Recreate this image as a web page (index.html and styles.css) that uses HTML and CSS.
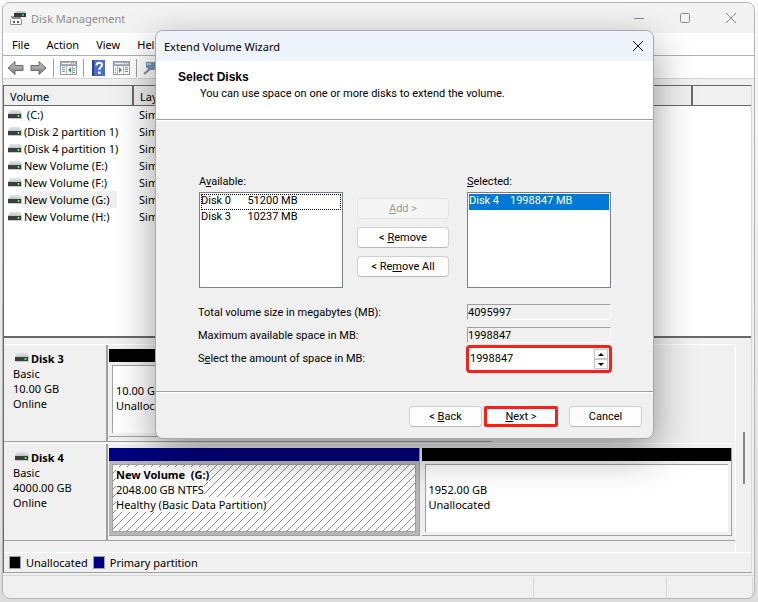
FILE: index.html
```
<!DOCTYPE html>
<html lang="en">
<head>
  <meta charset="UTF-8" />
  <meta name="viewport" content="width=device-width, initial-scale=1.0"/>
  <title>Disk Management</title>
  <link rel="stylesheet" href="styles.css">
</head>
<body>

<!-- shared icons -->
<svg class="sprite" aria-hidden="true">
  <defs>
    <linearGradient id="metal" x1="0" y1="0" x2="0" y2="1">
      <stop offset="0" stop-color="#e2e5e8"/>
      <stop offset="1" stop-color="#c3c7cc"/>
    </linearGradient>
    <linearGradient id="arrowFill" x1="0" y1="0" x2="0" y2="1">
      <stop offset="0" stop-color="#c4c4c4"/>
      <stop offset="1" stop-color="#7e7e7e"/>
    </linearGradient>
  </defs>
  <symbol id="drive" viewBox="0 0 14 9">
    <path d="M2 0h10l2 4H0z" fill="url(#metal)"/>
    <rect y="3" width="14" height="6" fill="#c3c7cc"/>
    <rect y="4" width="13" height="4" fill="#3b3d3f"/>
    <rect x="9" y="5" width="3" height="2" fill="#1f8f2c"/>
    <rect x="10" y="5" width="1" height="2" fill="#5dff5a"/>
  </symbol>
</svg>

<main class="window">
  <header class="titlebar">
    <svg class="app-icon" viewBox="0 0 16 15">
      <path d="M6 0h9l1 3H4z" fill="#c3c7cc"/>
      <rect x="4" y="2" width="12" height="4" fill="#35383b"/>
      <rect x="12" y="3" width="2" height="2" fill="#2bd13a"/>
      <path d="M1 5h3v2H1z" fill="#9aa0a6"/>
      <rect x="2" y="6" width="9" height="2" fill="#8a8d90"/>
      <rect x="0" y="8" width="12" height="6" rx="1" fill="#8d8f92"/>
      <rect x="1" y="8" width="10" height="5" fill="#f8f8f8"/>
      <rect x="3" y="10" width="2" height="2" fill="#5d5f62"/>
      <rect x="7" y="10" width="2" height="2" fill="#5d5f62"/>
    </svg>
    <h1>Disk Management</h1>
    <div class="caption-buttons">
      <button aria-label="Minimize"><svg viewBox="0 0 12 12"><path d="M1 6.500h10"/></svg></button>
      <button aria-label="Maximize"><svg viewBox="0 0 12 12"><rect x="1.500" y="1.500" width="9" height="9" rx="1"/></svg></button>
      <button aria-label="Close"><svg viewBox="0 0 12 12"><path d="M1 1l10 10M11 1L1 11"/></svg></button>
    </div>
  </header>

  <nav class="menubar">
    <button>File</button>
    <button>Action</button>
    <button>View</button>
    <button>Help</button>
  </nav>

  <div class="toolbar">
    <button aria-label="Back"><svg viewBox="0 0 17 14"><path d="M1 7l7-6.500v4h8v5H8v4z" fill="url(#arrowFill)" stroke="#6b6b6b"/></svg></button>
    <button aria-label="Forward"><svg viewBox="0 0 17 14"><path d="M16 7L9 .5v4H1v5h8v4z" fill="url(#arrowFill)" stroke="#6b6b6b"/></svg></button>
    <span class="sep"></span>
    <button aria-label="Show console tree">
      <svg viewBox="0 0 17 14">
        <rect x=".5" y=".5" width="16" height="13" fill="#fff" stroke="#969ba1"/>
        <path d="M1 1h15v3H1z" fill="#a9b3bf"/><path d="M2 2.500h9M12 2.500h1M14 2.500h1" stroke="#f1f4f8"/>
        <path d="M1 4.500h15" stroke="#969ba1"/>
        <path d="M2 6.500h3M2 8.500h3M2 10.500h3M13 7.500h2M13 9.500h2M13 11.500h2" stroke="#7391b5"/>
        <path d="M6.500 5v8M12.500 5v8" stroke="#b3b9c0"/>
        <path d="M11 6v6L8 9z" fill="#3faa36"/>
      </svg>
    </button>
    <span class="sep"></span>
    <button aria-label="Help topics">
      <svg class="help" viewBox="0 0 17 16">
        <rect x="2" y="0" width="13" height="16" fill="#4a6bd0"/>
        <path d="M2 0h2v16H2z" fill="#27408f"/>
        <path d="M6.500 5.500c0-4 5.500-3.500 5.500-.5 0 2-2.700 2-2.700 5" fill="none" stroke="#fff" stroke-width="2"/>
        <rect x="8" y="11.500" width="2.500" height="2.500" fill="#fff"/>
      </svg>
    </button>
    <button aria-label="Show action pane">
      <svg viewBox="0 0 17 14">
        <rect x=".5" y=".5" width="16" height="13" fill="#fff" stroke="#969ba1"/>
        <path d="M1 1h15v3H1z" fill="#a9b3bf"/><path d="M2 2.500h9M12 2.500h1M14 2.500h1" stroke="#f1f4f8"/>
        <path d="M1 4.500h15" stroke="#969ba1"/>
        <path d="M2 7.500h1M2 9.500h1M2 11.500h1M12 6.500h3M12 8.500h3M12 10.500h3" stroke="#7391b5"/>
        <path d="M4.500 5v8M10.500 5v8" stroke="#b3b9c0"/>
        <path d="M6 6v6l3-3z" fill="#3faa36"/>
      </svg>
    </button>
    <span class="sep"></span>
    <button aria-label="Rescan disks">
      <svg viewBox="0 0 17 14">
        <path d="M1 13l6-5" stroke="#8a8a8a" stroke-width="2"/>
        <path d="M3 1h13v8H6L3 6z" fill="#7397b6"/>
        <path d="M4 2h4v2H4z" fill="#b6cbdc"/>
      </svg>
    </button>
  </div>

  <section class="workspace">
    <div class="volumes">
      <table>
        <colgroup><col class="col-name"><col><col class="col-last"></colgroup>
        <thead>
          <tr><th>Volume</th><th>Layout</th><th></th></tr>
        </thead>
        <tbody>
          <tr><td><svg class="drive"><use href="#drive"/></svg><span>&nbsp;(C:)</span></td><td>Simple</td><td></td></tr>
          <tr><td><svg class="drive"><use href="#drive"/></svg><span>(Disk 2 partition 1)</span></td><td>Simple</td><td></td></tr>
          <tr><td><svg class="drive"><use href="#drive"/></svg><span>(Disk 4 partition 1)</span></td><td>Simple</td><td></td></tr>
          <tr><td><svg class="drive"><use href="#drive"/></svg><span>New Volume (E:)</span></td><td>Simple</td><td></td></tr>
          <tr><td><svg class="drive"><use href="#drive"/></svg><span>New Volume (F:)</span></td><td>Simple</td><td></td></tr>
          <tr class="current"><td><svg class="drive"><use href="#drive"/></svg><span>New Volume (G:)</span></td><td>Simple</td><td></td></tr>
          <tr><td><svg class="drive"><use href="#drive"/></svg><span>New Volume (H:)</span></td><td>Simple</td><td></td></tr>
        </tbody>
      </table>
    </div>

    <div class="graph">
      <div class="disks">
        <article class="disk">
          <div class="disk-info">
            <h2><svg class="drive"><use href="#drive"/></svg>Disk 3</h2>
            <p>Basic<br>10.00 GB<br>Online</p>
          </div>
          <div class="partitions short">
            <div class="partition">
              <div class="bar"></div>
              <div class="box"><p><br>10.00 GB<br>Unallocated</p></div>
            </div>
          </div>
        </article>
        <article class="disk">
          <div class="disk-info">
            <h2><svg class="drive"><use href="#drive"/></svg>Disk 4</h2>
            <p>Basic<br>4000.00 GB<br>Online</p>
          </div>
          <div class="partitions">
            <div class="partition primary">
              <div class="bar"></div>
              <div class="box hatched"><p><b>New Volume &nbsp;(G:)</b><br><span>2048.00 GB NTFS</span><br><span>Healthy (Basic Data Partition)</span></p></div>
            </div>
            <div class="partition">
              <div class="bar"></div>
              <div class="box"><p><br>1952.00 GB<br>Unallocated</p></div>
            </div>
          </div>
        </article>
      </div>
      <div class="scroll"><div class="thumb"></div></div>
    </div>

    <div class="legend">
      <span class="swatch"></span>Unallocated
      <span class="swatch navy"></span>Primary partition
    </div>
  </section>

  <footer class="statusbar"><span></span><span></span><span></span></footer>
</main>

<section class="dialog" role="dialog" aria-labelledby="wizardTitle">
  <header class="dialog-title">
    <h2 id="wizardTitle">Extend Volume Wizard</h2>
    <button aria-label="Close"><svg viewBox="0 0 12 12"><path d="M1 1l10 10M11 1L1 11"/></svg></button>
  </header>
  <div class="dialog-intro">
    <h3>Select Disks</h3>
    <p>You can use space on one or more disks to extend the volume.</p>
  </div>

  <div class="dialog-body">
    <div class="picker">
      <div>
        <label for="available">A<u>v</u>ailable:</label>
        <select id="available" size="6">
          <option class="focused">Disk 0&nbsp;&nbsp;&nbsp;&nbsp;&nbsp;&nbsp;51200 MB</option>
          <option>Disk 3&nbsp;&nbsp;&nbsp;&nbsp;&nbsp;&nbsp;10237 MB</option>
        </select>
      </div>
      <div class="picker-buttons">
        <button class="btn" disabled><u>A</u>dd &gt;</button>
        <button class="btn">&lt; <u>R</u>emove</button>
        <button class="btn">&lt; Re<u>m</u>ove All</button>
      </div>
      <div>
        <label for="selected"><u>S</u>elected:</label>
        <select id="selected" size="6">
          <option selected>Disk 4&nbsp;&nbsp;&nbsp;&nbsp;1998847 MB</option>
        </select>
      </div>
    </div>

    <div class="field">
      <label for="total">Total volume size in megabytes (MB):</label>
      <input id="total" class="readonly" value="4095997" readonly>
    </div>
    <div class="field">
      <label for="maximum">Maximum available space in MB:</label>
      <input id="maximum" class="readonly" value="1998847" readonly>
    </div>
    <div class="field amount">
      <label for="amount">S<u>e</u>lect the amount of space in MB:</label>
      <div class="spinner">
        <input id="amount" value="1998847">
        <div class="arrows">
          <button aria-label="Increase"><svg viewBox="0 0 6 3"><path d="M0 3l3-3 3 3z"/></svg></button>
          <button aria-label="Decrease"><svg viewBox="0 0 6 3"><path d="M0 0h6L3 3z"/></svg></button>
        </div>
      </div>
    </div>
  </div>

  <footer class="dialog-footer">
    <button class="btn">&lt; <u>B</u>ack</button>
    <button class="btn marked"><u>N</u>ext &gt;</button>
    <button class="btn cancel">Cancel</button>
  </footer>
</section>

</body>
</html>
```
FILE: styles.css
```
:root {
  --face: #f0f0f0;
  --shadow: #a0a0a0;
  --dark: #696969;
  --navy: #000080;
  --red: #fb2015;
  --ui: "Noto Sans", "Open Sans", sans-serif;
  --dlg: Roboto, "Liberation Sans", sans-serif;
}
* {
  box-sizing: border-box;
}
body {
  margin: 0;
  min-height: 100vh;
  display: flex;
  padding: 2px 3px 3px 2px;
  font: 11px/15px var(--ui);
  color: #000;
  background: linear-gradient(#fafafa, #dcdcdc);
}
h1, h2, h3, p {
  margin: 0;
  font-size: inherit;
  font-weight: normal;
}
button, input, select {
  font: inherit;
  color: inherit;
  margin: 0;
  padding: 0;
  border: 0;
  background: none;
  border-radius: 0;
}
svg {
  display: block;
}
.sprite {
  position: absolute;
  width: 0;
  height: 0;
}
.window {
  flex: 1;
  display: flex;
  flex-direction: column;
  border: 1px solid #b4b4b4;
  border-radius: 8px;
  background: var(--face);
  overflow: hidden;
}

/* title bar */
.titlebar {
  display: flex;
  align-items: center;
  height: 30px;
  padding-left: 7px;
  background: #f3f3f3;
  color: #8c8c8c;
}
.app-icon {
  width: 16px;
  height: 15px;
  margin-right: 5px;
}
.caption-buttons {
  display: flex;
  margin-left: auto;
}
.caption-buttons button {
  width: 46px;
  display: grid;
  place-items: center;
}
.caption-buttons svg, .dialog-title svg {
  width: 12px;
  height: 12px;
  fill: none;
  stroke: #8a8a8a;
}

/* menu and tools */
.menubar {
  display: flex;
  gap: 17px;
  height: 23px;
  padding: 0 9px;
  background: #fff;
  border-bottom: 1px solid #b0b0b0;
}
.toolbar {
  display: flex;
  align-items: center;
  gap: 6px;
  height: 23px;
  padding: 2px 4px 0;
  background: #fff;
  border-bottom: 1px solid #d5d5d5;
}
.toolbar svg {
  width: 17px;
  height: 14px;
}
.toolbar .help {
  height: 16px;
}
.sep {
  width: 1px;
  height: 18px;
  background: #a0a0a0;
}

/* volume list */
.workspace {
  flex: 1;
  display: flex;
  flex-direction: column;
  margin: 6px 2px 2px 0;
  border: 1px solid var(--dark);
  border-right-color: #d8d8d8;
  border-bottom-color: var(--shadow);
}
.volumes {
  flex: 1;
  background: #fff;
  border-bottom: 2px solid var(--dark);
}
.volumes table {
  width: 100%;
  table-layout: fixed;
  border-collapse: collapse;
}
.col-name {
  width: 129px;
}
.col-last {
  width: 59px;
}
.volumes th {
  height: 19px;
  padding: 2px 6px 0;
  text-align: left;
  font-weight: normal;
  background: var(--face);
  border-right: 2px solid var(--dark);
  border-bottom: 1px solid var(--dark);
}
.volumes th:last-child {
  border-right: 0;
}
.volumes td {
  height: 17px;
  padding: 0 6px 0 4px;
  white-space: nowrap;
}
.volumes td + td {
  padding-left: 6px;
}
.drive {
  display: inline-block;
  width: 14px;
  height: 9px;
  vertical-align: 0;
}
.volumes td span {
  display: inline-block;
  line-height: 17px;
  padding: 0 8px 0 2px;
}
.current span {
  background: var(--face);
}

/* disk graph */
.graph {
  display: flex;
  padding-top: 6px;
}
.disks {
  flex: 1;
  display: flex;
  flex-direction: column;
  gap: 1px;
  border-right: 1px solid #fff;
  padding-bottom: 11px;
}
.disk {
  display: flex;
  height: 98px;
  border-top: 1px solid #fff;
}
.disk-info {
  width: 104px;
  padding: 6px 9px;
  border-right: 2px solid var(--shadow);
  border-bottom: 1px solid var(--shadow);
}
.disk-info h2 {
  font-weight: bold;
  padding-left: 2px;
}
.disk-info .drive {
  margin-right: 2px;
  vertical-align: 1px;
}
.partitions {
  flex: 1;
  display: flex;
  gap: 2px;
  padding: 4px 3px 4px 1px;
  border-bottom: 1px solid var(--shadow);
}
.partitions.short {
  flex: 0 0 384px;
}
.partition {
  flex: 1;
  display: flex;
  flex-direction: column;
  border-right: 1px solid var(--shadow);
  border-bottom: 1px solid var(--shadow);
}
.bar {
  height: 13px;
  background: #000;
}
.box {
  flex: 1;
  margin: 3px;
  padding: 2px 3px;
  background: #fff;
  border-top: 1px solid var(--shadow);
  border-left: 1px solid var(--shadow);
}
.primary {
  background: #b8b8b8;
}
.primary .bar {
  background: var(--navy);
}
.hatched {
  border: 1px solid var(--shadow);
  background: linear-gradient(135deg, #fff 46%, #8c8c8c 46% 54%, #fff 54%) 0 0 / 8px 8px;
}
.hatched b, .hatched span {
  background: #fff;
}
.scroll {
  width: 15px;
  padding: 88px 5px 0 7px;
}
.thumb {
  width: 2px;
  height: 52px;
  background: #858585;
}

/* legend and status */
.legend {
  display: flex;
  align-items: center;
  gap: 5px;
  height: 20px;
  padding: 0 5px;
  border-top: 1px solid #fff;
}
.swatch {
  width: 12px;
  height: 13px;
  background: #000;
  border: 1px solid var(--shadow);
}
.swatch.navy {
  background: var(--navy);
}
.statusbar {
  display: flex;
  height: 23px;
  padding: 1px 1px 1px 0;
  border-top: 1px solid #d5d5d5;
}
.statusbar span {
  width: 86px;
  border-right: 1px solid #d5d5d5;
}
.statusbar span:first-child {
  flex: 1;
}
.statusbar span:nth-child(2) {
  width: 133px;
}

/* wizard */
.dialog {
  position: absolute;
  top: 30px;
  left: 155px;
  width: 499px;
  display: flex;
  flex-direction: column;
  font: 11px/13px var(--dlg);
  background: var(--face);
  border: 1px solid #a8a8a8;
  border-radius: 8px;
  box-shadow: 0 14px 40px rgba(0, 0, 0, .4);
  overflow: hidden;
}
.dialog-title {
  display: flex;
  align-items: center;
  justify-content: space-between;
  height: 30px;
  padding: 0 9px 0 8px;
  font: 11px/15px var(--ui);
  background: #eff3fb;
}
.dialog-title svg {
  stroke: #111;
}
.dialog-intro {
  height: 59px;
  padding: 9px 22px;
  background: #fff;
  border-bottom: 1px solid var(--shadow);
}
.dialog-intro h3 {
  font: bold 12px/15px "Liberation Sans", Arial, sans-serif;
}
.dialog-intro p {
  padding: 2px 22px;
}
.dialog-body {
  padding: 54px 42px 18px;
  border-top: 1px solid #fff;
}
.picker {
  display: grid;
  grid-template-columns: 144px 96px 144px;
  gap: 14px;
  padding-left: 1px;
  margin-bottom: 16px;
}
.picker label {
  display: block;
  margin-bottom: 4px;
}
select {
  display: block;
  width: 100%;
  height: 96px;
  padding: 1px;
  background: #fff;
  border: 1px solid #7a7f8a;
  overflow: hidden;
  outline: 0;
}
option {
  height: 16px;
  min-height: 16px;
  padding: 0;
  line-height: 16px;
}
option.focused {
  outline: 1px dotted #000;
  outline-offset: -1px;
}
option:checked {
  background: linear-gradient(#0078d7, #0078d7);
  -webkit-text-fill-color: #fff;
}
.picker-buttons {
  display: flex;
  flex-direction: column;
  gap: 8px;
  padding: 23px 4px 0 0;
}
.btn {
  height: 21px;
  background: #fdfdfd;
  border: 1px solid #d0d0d0;
  border-bottom-color: #b8b8b8;
  border-radius: 4px;
  white-space: pre;
}
.btn:disabled {
  color: #9a9a9a;
  background: #f5f5f5;
  border-color: #e3e3e3;
}
.field {
  display: flex;
  align-items: center;
  justify-content: space-between;
  margin-bottom: 7px;
}
.readonly {
  width: 144px;
  height: 16px;
  border: 1px solid #fff;
  border-top-color: var(--shadow);
  border-left-color: var(--shadow);
}
.field.amount {
  margin: -5px -1px 0 0;
}
.amount label {
  padding-bottom: 2px;
}
.spinner {
  display: flex;
  width: 146px;
  height: 28px;
  background: #fff;
  border: 3px solid var(--red);
  border-radius: 4px;
}
.spinner input {
  flex: 1;
  min-width: 0;
  padding: 0 0 2px 1px;
  outline: 0;
}
.arrows {
  display: flex;
  flex-direction: column;
  width: 16px;
  padding: 1px;
  background: var(--face);
}
.arrows button {
  flex: 1;
  display: grid;
  place-items: center;
  background: #fdfdfd;
  border: 1px solid #c8c8c8;
}
.arrows svg {
  width: 6px;
  height: 3px;
}
.dialog-footer {
  display: flex;
  justify-content: flex-end;
  gap: 2px;
  padding: 14px 11px 11px;
  border-top: 1px solid var(--shadow);
  box-shadow: inset 0 1px #fff;
}
.dialog-footer .btn {
  width: 73px;
}
.dialog-footer .marked {
  width: 74px;
  border: 3px solid var(--red);
  border-radius: 2px;
  line-height: 13px;
}
.btn.cancel {
  margin-left: 9px;
}
```
